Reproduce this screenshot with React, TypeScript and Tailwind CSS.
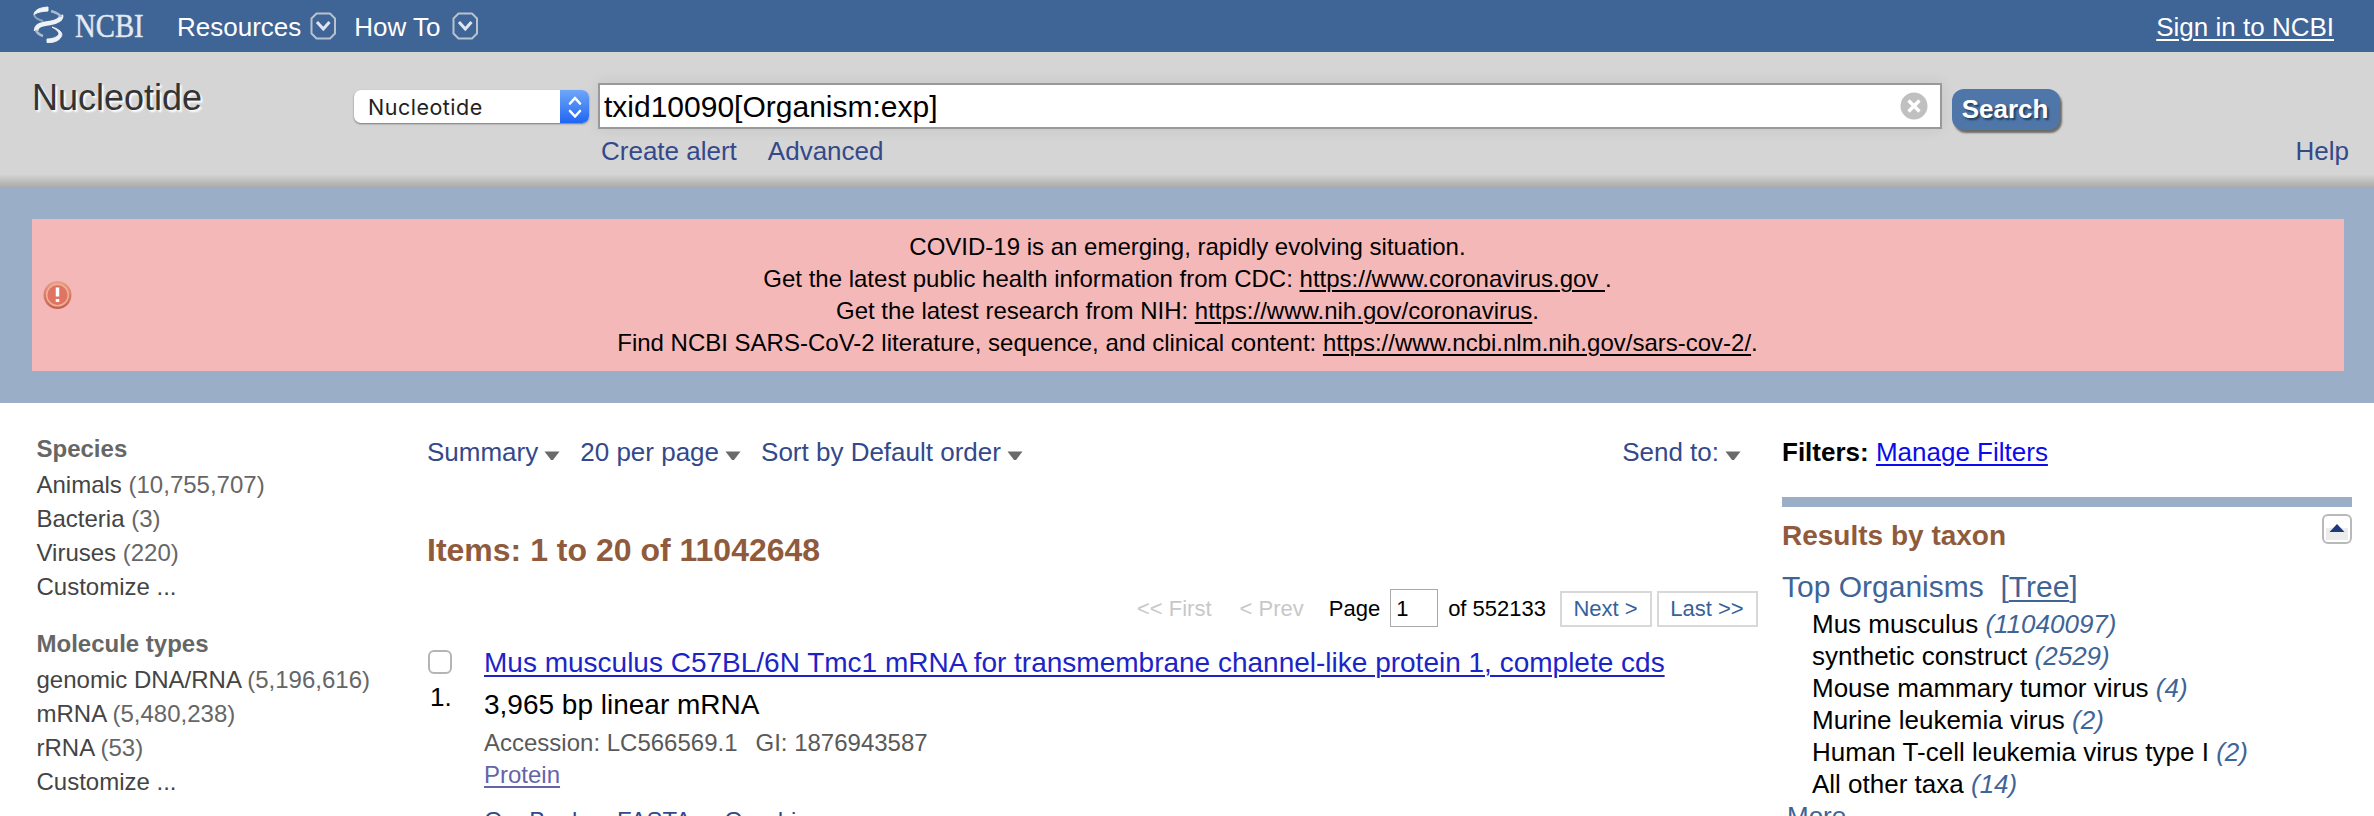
import React from "react";

const Chevron = () => (
  <svg width="28" height="32" viewBox="0 0 28 32" fill="none">
    <path d="M7.5 2.5H21L26 7.5V22.5L21 27.5H7.5L2.5 22.5V7.5Z" stroke="#b9c3d0" strokeWidth="2" strokeLinejoin="round" />
    <path d="M8 11L14.3 18L20.5 11" stroke="#dfe6ef" strokeWidth="3" />
  </svg>
);

const Caret = () => (
  <svg width="16" height="12" viewBox="0 0 16 12" className="mt-[8px] ml-[6px]">
    <path d="M0.5 1.5H15.5L9 10H7Z" fill="#6a6a6a" />
  </svg>
);

const Menu = ({ label }: { label: string }) => (
  <a className="flex items-center">
    {label}
    <Caret />
  </a>
);

const facets = [
  { title: "Species", rows: [["Animals", "(10,755,707)"], ["Bacteria", "(3)"], ["Viruses", "(220)"], ["Customize ...", ""]] },
  { title: "Molecule types", rows: [["genomic DNA/RNA", "(5,196,616)"], ["mRNA", "(5,480,238)"], ["rRNA", "(53)"], ["Customize ...", ""]] },
];

const taxa = [
  ["Mus musculus", "(11040097)"],
  ["synthetic construct", "(2529)"],
  ["Mouse mammary tumor virus", "(4)"],
  ["Murine leukemia virus", "(2)"],
  ["Human T-cell leukemia virus type I", "(2)"],
  ["All other taxa", "(14)"],
];

export default function App() {
  return (
    <div className="h-[816px] w-[2374px] overflow-hidden bg-white font-['Liberation_Sans',Arial,sans-serif] text-[26px] leading-[32px] text-black whitespace-nowrap">
      <header className="flex h-[52px] bg-[#3f6496] text-white">
        <svg className="mt-[6px] ml-[33px]" width="32" height="38" viewBox="0 0 32 38" fill="none">
          <path d="M15 1C7 1.5 1 4 1 9C3 6.5 8 5.5 15 5Z" fill="#f2f5f8" stroke="#f2f5f8" strokeWidth="1" />
          <path d="M1 9C2 12 6 14 10 15" stroke="#8ba5c4" strokeWidth="2" />
          <path d="M28 9C29 13 24 16 17 17C9 18 3 19 3 25" stroke="#eef2f6" strokeWidth="4.5" />
          <path d="M18 5C23 6.500 27 8 28 11" stroke="#a9bbd0" strokeWidth="2.5" />
          <path d="M3 24C4 27 7 29 10 30" stroke="#a9bbd0" strokeWidth="2.5" />
          <path d="M19 21C26 23 31 27 28 31C26 35 20 37 14 36.500V33C19 33 25 31 26 28C26 25 22 23 19 21Z" fill="#eef2f6" stroke="#eef2f6" strokeWidth="1" />
        </svg>
        <span className="mt-[10px] ml-[10px] w-[69px] origin-left scale-x-[0.87] font-['Liberation_Serif',serif] text-[33px] text-[#e6ebf1] [-webkit-text-stroke:0.5px_#dbe3ec]">NCBI</span>
        <span className="mt-[11px] ml-[33px]">Resources</span>
        <span className="mt-[11px] ml-[8px]"><Chevron /></span>
        <span className="mt-[11px] ml-[17px]">How To</span>
        <span className="mt-[11px] ml-[10px]"><Chevron /></span>
        <a className="mt-[11px] mr-[40px] ml-auto underline decoration-2 underline-offset-[3px]">Sign in to NCBI</a>
      </header>

      <div className="flex h-[135px] items-start bg-[linear-gradient(to_bottom,#d5d5d5_0,#d5d5d5_122px,#ababab_135px)]">
        <h1 className="mt-[26px] ml-[32px] w-[322px] text-[36px] leading-[40px] text-[#333] [text-shadow:2px_2px_2px_#fff]">Nucleotide</h1>
        <div className="mt-[38px] flex h-[33px] w-[235px] overflow-hidden rounded-[7px] bg-white shadow-[0_1px_2px_rgba(0,0,0,0.45)]">
          <span className="flex-1 pl-[14px] font-['Inter',sans-serif] text-[21.500px] leading-[34px] tracking-[0.5px] text-[#222]">Nucleotide</span>
          <span className="flex w-[29px] items-center justify-center bg-gradient-to-b from-[#6fa6f8] to-[#1f65f2]">
            <svg width="14" height="24" viewBox="0 0 14 24" fill="none" stroke="#fff" strokeWidth="2.6" strokeLinecap="round" strokeLinejoin="round">
              <path d="M2 8.500L7 3L12 8.500M2 16L7 21.500L12 16" />
            </svg>
          </span>
        </div>
        <div className="mt-[31px] ml-[9px] w-[1344px]">
          <div className="flex h-[46px] items-center border-2 border-[#999] bg-white pl-[4px] text-[30px] leading-[42px] shadow-[0_0_14px_rgba(0,0,0,0.08)]">
            <span className="mt-[2px]">txid10090[Organism:exp]</span>
            <svg className="mr-[12px] ml-auto" width="28" height="28" viewBox="0 0 28 28">
              <circle cx="14" cy="14" r="13.5" fill="#c0c0c0" />
              <path d="M8.500 8.500L19.500 19.500M19.500 8.500L8.500 19.500" stroke="#fff" strokeWidth="3.4" />
            </svg>
          </div>
          <div className="mt-[6px] ml-[3px] flex gap-[31px] text-[#34498a]">
            <a>Create alert</a>
            <a>Advanced</a>
          </div>
        </div>
        <button className="mt-[37px] ml-[10px] h-[41px] w-[108px] rounded-[12px] bg-[#4f76a8] pr-[2px] text-[26px] leading-[39px] font-bold text-white shadow-[2px_3px_2px_#6b6b6b] [text-shadow:2px_2px_2px_#203e5f]"><span className="block -mt-px">Search</span></button>
        <a className="mt-[83px] mr-[25px] ml-auto text-[#34498a]">Help</a>
      </div>

      <div className="h-[216px] bg-[#9aaec8] pt-[32px] pr-[30px] pl-[32px]">
        <div className="flex h-[152px] items-center bg-[#f5b8b8] text-[24px]">
          <svg className="ml-[11px]" width="29" height="30" viewBox="0 0 29 30">
            <defs>
              <linearGradient id="alert" x1="0" y1="0" x2="0" y2="1">
                <stop offset="0" stopColor="#ec9f86" />
                <stop offset="1" stopColor="#c4604f" />
              </linearGradient>
            </defs>
            <circle cx="14.5" cy="15" r="14" fill="url(#alert)" />
            <circle cx="14.5" cy="15" r="10.8" fill="#de7461" stroke="#efb09b" strokeWidth="1.5" />
            <path d="M14.5 7.5V16.5M14.5 19V22" stroke="#fff" strokeWidth="3.5" />
          </svg>
          <div className="mr-[41px] flex-1 text-center">
            <p>COVID-19 is an emerging, rapidly evolving situation.</p>
            <p>Get the latest public health information from CDC: <a className="underline decoration-2 underline-offset-[3px]">https://www.coronavirus.gov&nbsp;</a>.</p>
            <p>Get the latest research from NIH: <a className="underline decoration-2 underline-offset-[3px]">https://www.nih.gov/coronavirus</a>.</p>
            <p>Find NCBI SARS-CoV-2 literature, sequence, and clinical content: <a className="underline decoration-2 underline-offset-[3px]">https://www.ncbi.nlm.nih.gov/sars-cov-2/</a>.</p>
          </div>
        </div>
      </div>

      <main className="flex">
        <aside className="w-[427px] pt-[29px] pl-[36.5px] text-[24px] leading-[34px] text-[#444]">
          {facets.map((f) => (
            <section key={f.title} className="mb-[23px]">
              <h3 className="mb-[2px] font-bold text-[#666]">{f.title}</h3>
              {f.rows.map(([name, n]) => (
                <p key={name}>{name} <span className="text-[#666]">{n}</span></p>
              ))}
            </section>
          ))}
        </aside>

        <section className="w-[1331px] pt-[33px]">
          <div className="flex text-[#34498a]">
            <div className="flex gap-[20px]">
              <Menu label="Summary" />
              <Menu label="20 per page" />
              <Menu label="Sort by Default order" />
            </div>
            <div className="mr-[17px] ml-auto"><Menu label="Send to:" /></div>
          </div>
          <h2 className="mt-[65px] text-[32px] leading-[34px] font-bold text-[#8f5b3c]">Items: 1 to 20 of 11042648</h2>
          <div className="mt-[22px] flex h-[38px] items-center justify-end text-[22px]">
            <span className="mt-[2px] mr-[28px] text-[#c8c8c8]">&lt;&lt; First</span>
            <span className="mt-[2px] mr-[25px] text-[#c8c8c8]">&lt; Prev</span>
            <span className="mt-[2px] mr-[10px]">Page</span>
            <span className="mr-[10px] h-[38px] w-[48px] border border-[#aaa] pl-[5px] leading-[38px]">1</span>
            <span className="mt-[2px] mr-[14px]">of 552133</span>
            <span className="mt-[2px] mr-[5px] h-[36px] w-[92px] border-2 border-[#d8d8d8] pr-px text-center leading-[32px] text-[#36629b]">Next &gt;</span>
            <span className="mt-[2px] h-[36px] w-[101px] border-2 border-[#d8d8d8] pr-px text-center leading-[32px] text-[#36629b]">Last &gt;&gt;</span>
          </div>
          <div className="mt-[19px] flex">
            <div className="w-[57px] pt-[4px]">
              <div className="ml-px h-[24px] w-[24px] rounded-[6px] border-2 border-[#b5b5b5] bg-white" />
              <p className="mt-[7px] ml-[3px]">1.</p>
            </div>
            <div>
              <p className="text-[28px] leading-[34px] text-[#1c24c8]"><a className="underline decoration-2 underline-offset-[3px]">Mus musculus C57BL/6N Tmc1 mRNA for transmembrane channel-like protein 1, complete cds</a></p>
              <p className="mt-[8px] text-[28px] leading-[34px]">3,965 bp linear mRNA</p>
              <p className="mt-[5px] text-[24px] text-[#595959]">Accession: LC566569.1<span className="ml-[18px]">GI: 1876943587</span></p>
              <p className="text-[24px] text-[#6464a8]"><a className="underline decoration-2 underline-offset-[3px]">Protein</a></p>
              <p className="mt-[14px] flex gap-[33px] text-[24px] text-[#34498a]"><a>GenBank</a><a>FASTA</a><a>Graphics</a></p>
            </div>
          </div>
        </section>

        <aside className="ml-[24px] w-[570px] pt-[33px]">
          <p><b>Filters:</b> <a className="text-[#0a0aee] underline decoration-2 underline-offset-[3px]">Manage Filters</a></p>
          <div className="mt-[29px] h-[10px] bg-[#9aaec8]" />
          <div className="mt-[7px] flex h-[44px] items-start justify-between">
            <h3 className="pt-[6px] text-[28px] font-bold text-[#8f5b3c]">Results by taxon</h3>
            <svg width="30" height="30" viewBox="0 0 30 30">
              <rect x="1" y="1" width="28" height="28" rx="5" fill="#fff" stroke="#b9b9b9" strokeWidth="2" />
              <rect x="4" y="14" width="22" height="12" fill="#ececec" />
              <path d="M15 10L22.5 18H7.5Z" fill="#1f3a78" />
            </svg>
          </div>
          <p className="mt-[11px] text-[30px] leading-[36px] text-[#3f6496]">Top Organisms&nbsp; [<a className="underline decoration-2 underline-offset-[3px]">Tree</a>]</p>
          <div className="mt-[3px] ml-[30px]">
            {taxa.map(([name, n]) => (
              <p key={name}>{name} <i className="text-[#3f6496]">{n}</i></p>
            ))}
          </div>
          <p className="ml-[5px] text-[#3f6496]">More...</p>
        </aside>
      </main>
    </div>
  );
}
